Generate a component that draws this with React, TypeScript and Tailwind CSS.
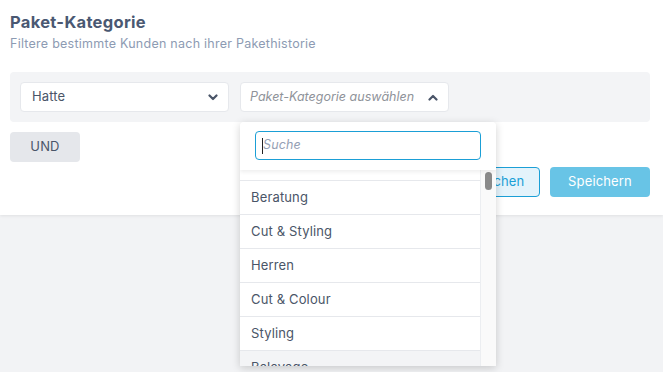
const font = { fontFamily: 'Inter, "Noto Sans", sans-serif' }

function Chevron({ up }: { up?: boolean }) {
  return (
    <svg width="10" height="7" viewBox="0 0 10 7" className="text-[#4a5568]">
      <path
        d={up ? 'M1.5 5.5 L5 2 L8.5 5.5' : 'M1.5 1.5 L5 5 L8.5 1.5'}
        fill="none"
        stroke="currentColor"
        strokeWidth="2.2"
        strokeLinecap="round"
        strokeLinejoin="round"
      />
    </svg>
  )
}

const items = ['Alle', 'Beratung', 'Cut & Styling', 'Herren', 'Cut & Colour', 'Styling', 'Balayage']

export default function App() {
  return (
    <div className="min-h-screen bg-[#f2f3f5] text-[#4a5568] tracking-[0.15px]" style={font}>
      <div className="bg-white pl-[10px] pr-[13px] pt-[11px] pb-[18px] shadow-[0_1px_3px_rgba(0,0,0,0.08)]">
        <h1 className="text-[16.5px] font-bold leading-[22px] tracking-[0.3px] text-[#4a5872]">Paket-Kategorie</h1>
        <p className="mt-[3px] text-[12.5px] leading-[16px] tracking-[0.25px] text-[#8d9bb3]">
          Filtere bestimmte Kunden nach ihrer Pakethistorie
        </p>

        <div className="mt-[20px] flex h-[50px] items-center gap-[11px] rounded-[4px] bg-[#f3f4f6] px-[10px]">
          <div className="flex h-[30px] w-[209px] items-center justify-between rounded-[4px] border border-[#e6e8ec] bg-white pl-[11px] pr-[10px]">
            <span className="text-[13px]">Hatte</span>
            <Chevron />
          </div>
          <div className="relative">
            <div className="flex h-[30px] w-[209px] items-center justify-between rounded-[4px] border border-[#e6e8ec] bg-white pl-[9px] pr-[10px]">
              <span className="text-[12.5px] italic tracking-normal text-[#8f939a]">Paket-Kategorie auswählen</span>
              <Chevron up />
            </div>
            <div className="absolute left-0 top-[40px] z-10 w-[256px] overflow-hidden rounded-t-[4px] bg-white shadow-[0_2px_8px_rgba(0,0,0,0.18)]">
              <div className="relative z-10 bg-white px-[15px] pt-[9px] pb-[10px] shadow-[0_2px_4px_rgba(0,0,0,0.07)]">
                <div className="flex h-[29px] items-center rounded-[4px] border border-[#1b9fd6] px-[6px]">
                  <span className="h-[16px] w-px bg-[#222]" />
                  <span className="text-[12.5px] italic text-[#95a0b4]">Suche</span>
                </div>
              </div>
              <div className="flex h-[196px] overflow-hidden">
                <div className="flex-1 border-r border-[#eceef1]">
                  <div className="-mt-[23px]">
                    {items.map((it, i) => (
                      <div
                        key={it}
                        className={
                          'flex h-[34px] items-center border-b border-[#e6e8ec] px-[11px] text-[13px] ' +
                          (i === items.length - 1 ? 'bg-[#f3f4f6]' : 'bg-white')
                        }
                      >
                        {it}
                      </div>
                    ))}
                  </div>
                </div>
                <div className="w-[15px] bg-[#fafafa] pt-[2px]">
                  <div className="mx-auto h-[18px] w-[7px] rounded-full bg-[#8a8a8a]" />
                </div>
              </div>
            </div>
          </div>
        </div>

        <button className="mt-[10px] flex h-[30px] w-[70px] items-center justify-center rounded-[4px] bg-[#e5e7eb] text-[13px] text-[#4a5568]">
          UND
        </button>

        <div className="mt-[5px] flex justify-end gap-[10px]">
          <button className="flex h-[30px] w-[100px] items-center justify-center rounded-[4px] border border-[#1b9fd6] bg-[#e4f3fb] text-[13px] text-[#1b9fd6]">
            Abbrechen
          </button>
          <button className="flex h-[30px] w-[100px] items-center justify-center rounded-[4px] bg-[#68c4e6] text-[13px] text-white">
            Speichern
          </button>
        </div>
      </div>
    </div>
  )
}
